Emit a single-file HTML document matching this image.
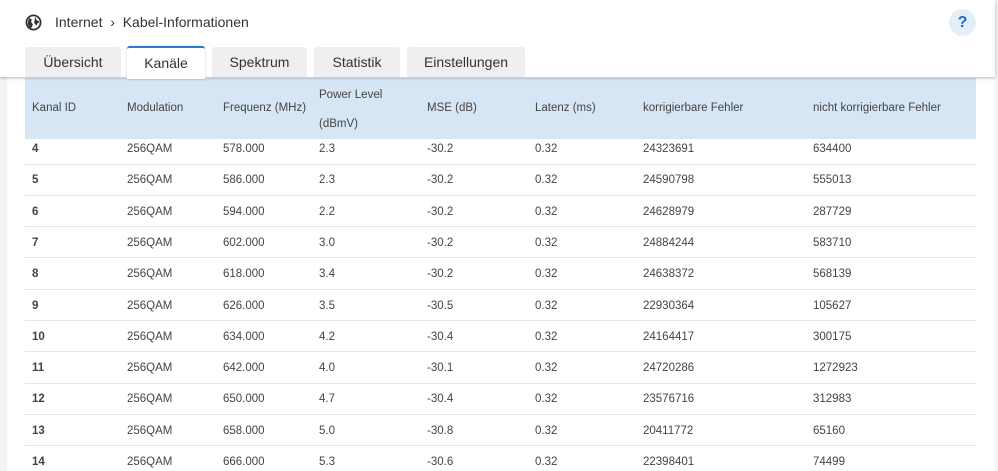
<!DOCTYPE html>
<html><head><meta charset="utf-8"><style>
html,body{margin:0;width:998px;height:471px;overflow:hidden}
body{background:#f3f3f3;font-family:"Liberation Sans",sans-serif;color:#444;position:relative}
.panel{position:absolute;left:7px;top:0;width:988px;height:471px;background:#fff}
.hdr{position:absolute;left:0;top:0;width:995px;height:77px;background:#fff;box-shadow:0 1px 3px rgba(0,0,0,.3);z-index:2}
.crumb{position:absolute;left:55px;top:14px;font-size:14px;color:#333}
.tab{position:absolute;top:47px;height:30px;background:#efefef;border-radius:3px 3px 0 0;font-size:14px;line-height:30px;text-align:center;color:#333}
.tab.act{background:#fff;border-top:2px solid #2a7bd0;top:46px;height:31px;box-shadow:0 0 2px rgba(0,0,0,.2)}
.help{position:absolute;left:949px;top:9px;width:27px;height:27px;border-radius:50%;background:#e3eef9;color:#1e6ac6;font-weight:bold;font-size:16px;text-align:center;line-height:27px}
.th{position:absolute;left:25px;top:78px;width:951px;height:61px;background:#d6e6f5}
.c{position:absolute;font-size:11.5px;white-space:nowrap}
.line{position:absolute;left:25px;width:951px;height:1px;background:#e6e6e6}
</style></head><body>
<div class="panel"></div>
<div class="hdr">
<svg style="position:absolute;left:25px;top:14px" width="17" height="17" viewBox="0 0 24 24"><circle cx="12" cy="12" r="10" fill="none" stroke="#333" stroke-width="2.5"/><path d="M6 6c3 0 4 2 3 4s2 3 2 5-2 3-2 5c-3-1-5-4-5-7 0-3 1-5 2-7zM14 4c2 2 1 4 3 5s3 1 3 3c-2 0-3 2-3 4-2 0-2-2-4-3 0-3 1-5 1-9z" fill="#333"/></svg>
<div class="crumb">Internet&nbsp;&nbsp;›&nbsp;&nbsp;Kabel-Informationen</div>
<div class="help">?</div>
<div class="tab" style="left:25px;width:96px">Übersicht</div>
<div class="tab act" style="left:127px;width:78px">Kanäle</div>
<div class="tab" style="left:212px;width:95px">Spektrum</div>
<div class="tab" style="left:314px;width:86px">Statistik</div>
<div class="tab" style="left:407px;width:118px">Einstellungen</div>
</div>
<div class="th"></div>
<div id="t"></div>
<script>
var cols=[32,127,223,319,427,535,643,813];
var h=["Kanal ID","Modulation","Frequenz (MHz)","","MSE (dB)","Latenz (ms)","korrigierbare Fehler","nicht korrigierbare Fehler"];
var s="";
h.forEach(function(t,i){if(t)s+='<div class="c" style="left:'+cols[i]+'px;top:102px">'+t+'</div>';});
s+='<div class="c" style="left:319px;top:89px">Power Level</div><div class="c" style="left:319px;top:118px">(dBmV)</div>';
var d=[[4,578,"2.3","-30.2",24323691,634400],[5,586,"2.3","-30.2",24590798,555013],[6,594,"2.2","-30.2",24628979,287729],[7,602,"3.0","-30.2",24884244,583710],[8,618,"3.4","-30.2",24638372,568139],[9,626,"3.5","-30.5",22930364,105627],[10,634,"4.2","-30.4",24164417,300175],[11,642,"4.0","-30.1",24720286,1272923],[12,650,"4.7","-30.4",23576716,312983],[13,658,"5.0","-30.8",20411772,65160],[14,666,"5.3","-30.6",22398401,74499]];
d.forEach(function(r,k){var y=143+k*31.3;
var v=[r[0],"256QAM",r[1]+".000",r[2],r[3],"0.32",r[4],r[5]];
v.forEach(function(t,i){s+='<div class="c" style="left:'+cols[i]+'px;top:'+y+'px;'+(i==0?'font-weight:bold':'')+'">'+t+'</div>';});
s+='<div class="line" style="top:'+(163.5+k*31.3)+'px"></div>';});
document.getElementById("t").innerHTML=s;
</script>
</body></html>
